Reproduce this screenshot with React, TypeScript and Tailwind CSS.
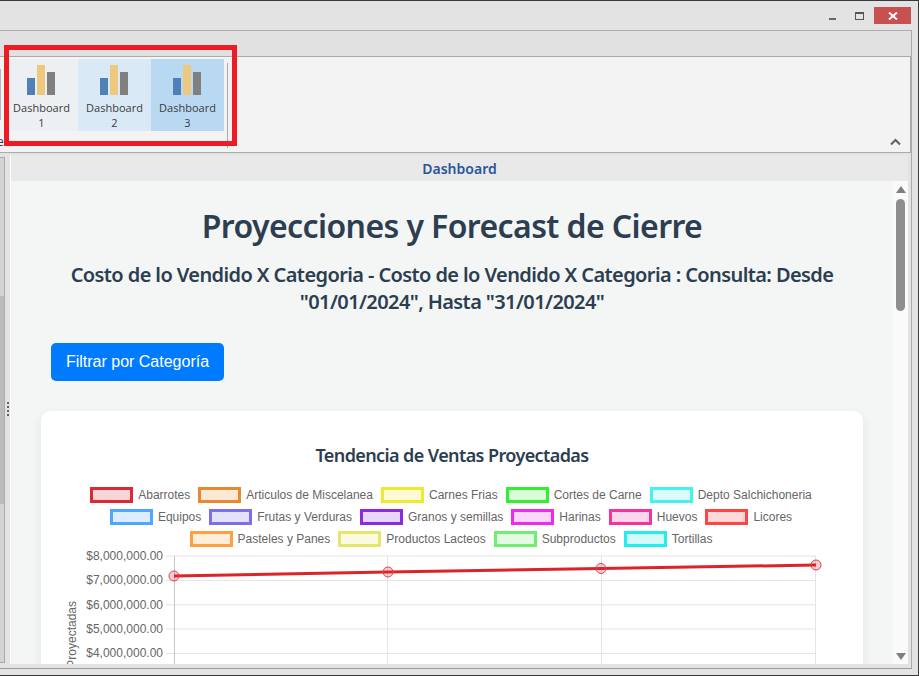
const legend = [
  [
    ["Abarrotes", "border-[#dc2a35] bg-[#f8d6d8]"],
    ["Articulos de Miscelanea", "border-[#e8882f] bg-[#fbe9d8]"],
    ["Carnes Frias", "border-[#eeea2d] bg-[#fcfbd6]"],
    ["Cortes de Carne", "border-[#33ee33] bg-[#d8fbd8]"],
    ["Depto Salchichoneria", "border-[#44f2f2] bg-[#dafcfc]"],
  ],
  [
    ["Equipos", "border-[#4da6ff] bg-[#dbedff]"],
    ["Frutas y Verduras", "border-[#7a70ee] bg-[#e4e2fb]"],
    ["Granos y semillas", "border-[#8a2be2] bg-[#e8d5f9]"],
    ["Harinas", "border-[#ee2aee] bg-[#fbd5fb]"],
    ["Huevos", "border-[#f5339a] bg-[#fdd6eb]"],
    ["Licores", "border-[#ff4444] bg-[#ffd9d9]"],
  ],
  [
    ["Pasteles y Panes", "border-[#ff9f40] bg-[#ffecd9]"],
    ["Productos Lacteos", "border-[#e8e56b] bg-[#fafae1]"],
    ["Subproductos", "border-[#70ee70] bg-[#e2fbe2]"],
    ["Tortillas", "border-[#22eeee] bg-[#d3fbfb]"],
  ],
];

const yLabels = ["$8,000,000.00", "$7,000,000.00", "$6,000,000.00", "$5,000,000.00", "$4,000,000.00"];

function Bars() {
  return (
    <svg width="28" height="30" viewBox="0 0 28 30" className="block self-start ml-[22px]">
      <rect x="0" y="13" width="8" height="17" fill="#4f81b8" />
      <rect x="10" y="0" width="8" height="30" fill="#edc87e" />
      <rect x="20" y="7" width="8" height="23" fill="#808080" />
    </svg>
  );
}

function RibbonButton({ n, cls }: { n: number; cls: string }) {
  return (
    <div className={`w-[73px] h-[72px] flex flex-col items-center pt-[6px] ${cls}`}>
      <Bars />
      <div className="mt-[5px] text-center text-[11px] leading-[15px] text-[#3b3b3b] font-['Open_Sans',sans-serif]">
        Dashboard
        <br />
        {n}
      </div>
    </div>
  );
}

function Chart() {
  const xs = [174, 388, 601, 816];
  const gridXs = [174.5, 387.5, 601.5, 815.5];
  const ys = [556, 580.4, 604.8, 629, 653.4];
  const pts = [576, 572, 568.5, 565];
  const ox = 41;
  const oy = 550;
  return (
    <svg width="822" height="114" viewBox={`${ox} ${oy} 822 114`} className="block">
      {ys.map((y) => (
        <line key={y} x1="166" x2="816" y1={y} y2={y} stroke="#e4e4e4" strokeWidth="1" />
      ))}
      {gridXs.map((x, i) => (
        <line key={x} x1={x} x2={x} y1="556" y2="664" stroke={i === 0 ? "#c8c8c8" : "#e4e4e4"} strokeWidth="1" />
      ))}
      {ys.map((y, i) => (
        <text key={i} x="163" y={y + 4} textAnchor="end" fontSize="12" fill="#666666" fontFamily="'Liberation Sans', sans-serif">
          {yLabels[i]}
        </text>
      ))}
      <text
        transform="translate(76 601) rotate(-90)"
        textAnchor="end"
        fontSize="12"
        fill="#666666"
        fontFamily="'Liberation Sans', sans-serif"
      >
        Proyectadas
      </text>
      <polyline points={xs.map((x, i) => `${x},${pts[i]}`).join(" ")} fill="none" stroke="#dc2428" strokeWidth="3" />
      {xs.map((x, i) => (
        <circle key={x} cx={x} cy={pts[i]} r="5" fill="#dc2a35" fillOpacity="0.22" stroke="#e8404a" strokeWidth="1" />
      ))}
    </svg>
  );
}

export default function App() {
  return (
    <div className="relative w-[919px] h-[676px] overflow-hidden bg-[#e3e3e3] border-t border-r border-[#3a3a3a] font-['Liberation_Sans',sans-serif] flex flex-col">
      {/* Title bar */}
      <div className="h-[29px] shrink-0 flex items-start justify-end pr-[7px]">
        <div className="mt-[17px] mr-[19px] w-[7px] h-[2px] bg-[#666666]" />
        <div className="mt-[11px] mr-[10px] w-[9px] h-[8px] border border-t-2 border-[#555555]" />
        <div className="mt-[6px] w-[37px] h-[17px] bg-[#c75050] flex items-center justify-center">
          <svg width="10" height="8" viewBox="0 0 10 8">
            <path d="M1 0.5 L9 7.5 M9 0.5 L1 7.5" stroke="#ffffff" strokeWidth="2" fill="none" />
          </svg>
        </div>
      </div>

      {/* Tab strip */}
      <div className="h-[26px] shrink-0 mr-[6px] bg-[#e1e1e1] border-t border-r border-[#ababab]" />

      {/* Ribbon */}
      <div className="h-[97px] shrink-0 mr-[6px] bg-[#f3f3f3] border-y border-r-2 border-[#ababab] flex pt-[2px] relative overflow-hidden">
        <div className="w-px h-[51px] mt-[10px] mr-[4px] bg-[#b5b5b5]" />
        <span className="absolute left-[-3px] top-[77px] text-[12px] leading-[15px] text-[#3b3b3b] font-['Open_Sans',sans-serif]">
          e
        </span>
        <RibbonButton n={1} cls="bg-[#ecf0f3]" />
        <RibbonButton n={2} cls="bg-[#dae9f6]" />
        <RibbonButton n={3} cls="bg-[#b9d9f3]" />
        <div className="ml-[3px] mt-[4px] w-px h-[85px] bg-[#ababab]" />
        <div className="ml-auto mr-[9px] mt-[79px] h-[10px]">
          <svg width="11" height="8" viewBox="0 0 11 8" className="block">
            <path d="M1 6.5 L5.5 2 L10 6.5" stroke="#5f5f5f" strokeWidth="2" fill="none" />
          </svg>
        </div>
      </div>

      {/* Body */}
      <div className="h-[515px] shrink-0 mr-[6px] border-r border-[#ababab] flex pt-[2px]">
        {/* Left collapsed panel */}
        <div className="w-[5px] h-[506px] mt-[2px] shrink-0 bg-[#d4d4d4] border-t border-r border-b border-[#ababab] flex flex-col">
          <div className="h-[138px] shrink-0" />
          <div className="h-[208px] shrink-0 bg-[#bcbcbc]" />
        </div>
        {/* Splitter */}
        <div className="w-[5px] shrink-0 h-[508px] flex flex-col items-center justify-center gap-[2px] pl-[1px]">
          <div className="w-[2px] h-[2px] bg-[#666666]" />
          <div className="w-[2px] h-[2px] bg-[#666666]" />
          <div className="w-[2px] h-[2px] bg-[#666666]" />
          <div className="w-[2px] h-[2px] bg-[#666666]" />
        </div>

        {/* Main panel */}
        <div className="w-[898px] h-[509px] shrink-0 border-l border-white flex flex-col">
          <div className="h-[26px] shrink-0 bg-[#e9e9e9] text-center text-[14px] leading-[27px] font-semibold text-[#2a5699] font-['Noto_Sans',sans-serif]">
            Dashboard
          </div>
          <div className="flex-1 min-h-0 flex">
            <div className="w-[882px] shrink-0 bg-[#f4f6f6] overflow-hidden">
              <h1 className="mt-[21px] text-center text-[32px] leading-[48px] tracking-[-0.6px] font-semibold text-[#2c3e50] font-['Noto_Sans',sans-serif]">
                Proyecciones y Forecast de Cierre
              </h1>
              <h2 className="mt-[11px] mx-auto w-[790px] text-center text-[20px] leading-[27px] tracking-[-0.6px] font-semibold text-[#2c3e50] font-['Noto_Sans',sans-serif]">
                Costo de lo Vendido X Categoria - Costo de lo Vendido X Categoria : Consulta: Desde "01/01/2024", Hasta "31/01/2024"
              </h2>
              <button className="block ml-[40px] mt-[28px] w-[173px] h-[38px] rounded-[5px] bg-[#007bff] text-white text-[16px] font-['Liberation_Sans',sans-serif]">
                Filtrar por Categoría
              </button>
              <div className="ml-[30px] mt-[30px] w-[822px] h-[320px] bg-white rounded-[10px] shadow-[0_4px_12px_rgba(0,0,0,0.08)]">
                <h3 className="pt-[31px] text-center text-[18px] leading-[26px] tracking-[-0.6px] font-semibold text-[#2c3e50] font-['Noto_Sans',sans-serif]">
                  Tendencia de Ventas Proyectadas
                </h3>
                <div className="mt-[16px] pr-[2px] flex flex-col items-center">
                  {legend.map((row, i) => (
                    <div key={i} className="h-[22px] flex items-center gap-[8px]">
                      {row.map(([label, cls]) => (
                        <div key={label} className="flex items-center gap-[5px]">
                          <div className={`w-[43px] h-[16px] border-[3px] ${cls}`} />
                          <span className="text-[12px] text-[#666666]">{label}</span>
                        </div>
                      ))}
                    </div>
                  ))}
                </div>
                <Chart />
              </div>
            </div>
            {/* Scrollbar */}
            <div className="w-[15px] shrink-0 bg-[#fafafa] flex flex-col items-center pt-[5px]">
              <svg width="10" height="7" viewBox="0 0 10 7" className="block">
                <path d="M5 0 L10 7 L0 7 Z" fill="#7e7e7e" />
              </svg>
              <div className="mt-[6px] w-[9px] h-[112px] rounded-full bg-[#8e8e8e]" />
              <svg width="10" height="7" viewBox="0 0 10 7" className="block mt-auto mb-[4px]">
                <path d="M0 0 L10 0 L5 7 Z" fill="#7e7e7e" />
              </svg>
            </div>
          </div>
        </div>
      </div>

      {/* Bottom chrome */}
      <div className="h-px shrink-0 mr-[6px] bg-[#9a9a9a]" />
      <div className="h-[6px] shrink-0" />
      <div className="h-px shrink-0 bg-[#3a3a3a]" />

      {/* Red annotation */}
      <div className="absolute left-[4px] top-[44px] w-[233px] h-[101px] border-[5px] border-[#ed1c24]" />
    </div>
  );
}
